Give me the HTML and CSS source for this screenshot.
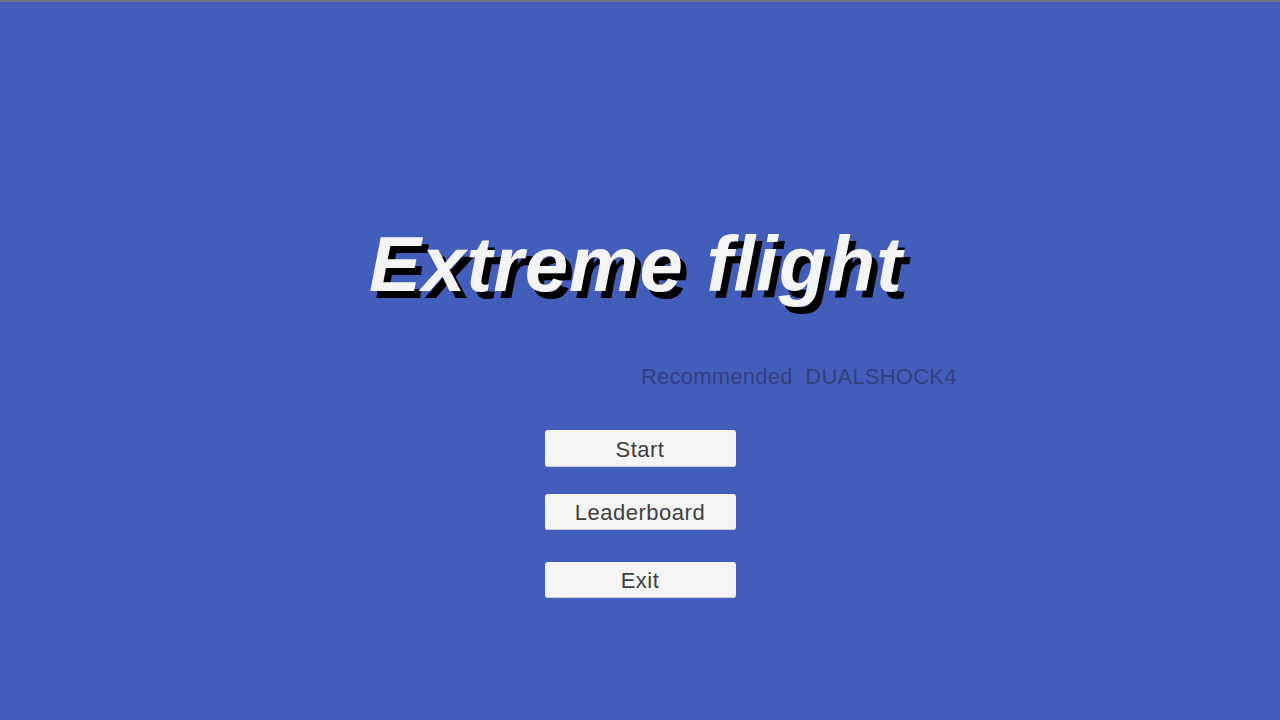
FILE: index.html
```html
<!DOCTYPE html>
<html>
<head>
<meta charset="utf-8">
<link rel="stylesheet" href="styles.css">
</head>
<body>
<div class="screen">
  <h1 class="title">Extreme flight</h1>
  <div class="recommend">Recommended&nbsp;&nbsp;DUALSHOCK4</div>
  <div class="menu">
    <button class="btn btn-start">Start</button>
    <button class="btn btn-board">Leaderboard</button>
    <button class="btn btn-exit">Exit</button>
  </div>
</div>
</body>
</html>
```
FILE: styles.css
```css
html, body {
  margin: 0;
  padding: 0;
  width: 1280px;
  height: 720px;
  overflow: hidden;
}
body {
  background: #435eba;
  font-family: "Liberation Sans", Arial, sans-serif;
}
.screen {
  border-top: 2px solid #6f7488;
  display: flex;
  flex-direction: column;
  align-items: center;
  padding-top: 223px;
  box-sizing: border-box;
  height: 720px;
}
.title {
  margin: 0;
  font-size: 78px;
  line-height: 78px;
  font-weight: bold;
  font-style: italic;
  color: #f4f4f4;
  text-shadow: 6px 7px 0 #000;
  transform: translateX(-4px);
  letter-spacing: 1px;
}
.recommend {
  margin-top: 61px;
  align-self: flex-start;
  margin-left: 641px;
  font-size: 22px;
  line-height: 26px;
  letter-spacing: 0.22px;
  color: #323f80;
}
.menu {
  margin-top: 40px;
  display: flex;
  flex-direction: column;
  align-items: center;
}
.btn {
  width: 191px;
  height: 37px;
  padding: 2px 0 0;
  border: none;
  border-radius: 3px;
  background: #f4f4f4;
  box-shadow: inset 0 -1px 0 #c9cbd3;
  font-family: "Liberation Sans", Arial, sans-serif;
  font-size: 22px;
  letter-spacing: 0.5px;
  color: #404040;
}
.btn-board {
  margin-top: 27px;
  height: 36px;
}
.btn-exit {
  margin-top: 32px;
  height: 36px;
}
```
